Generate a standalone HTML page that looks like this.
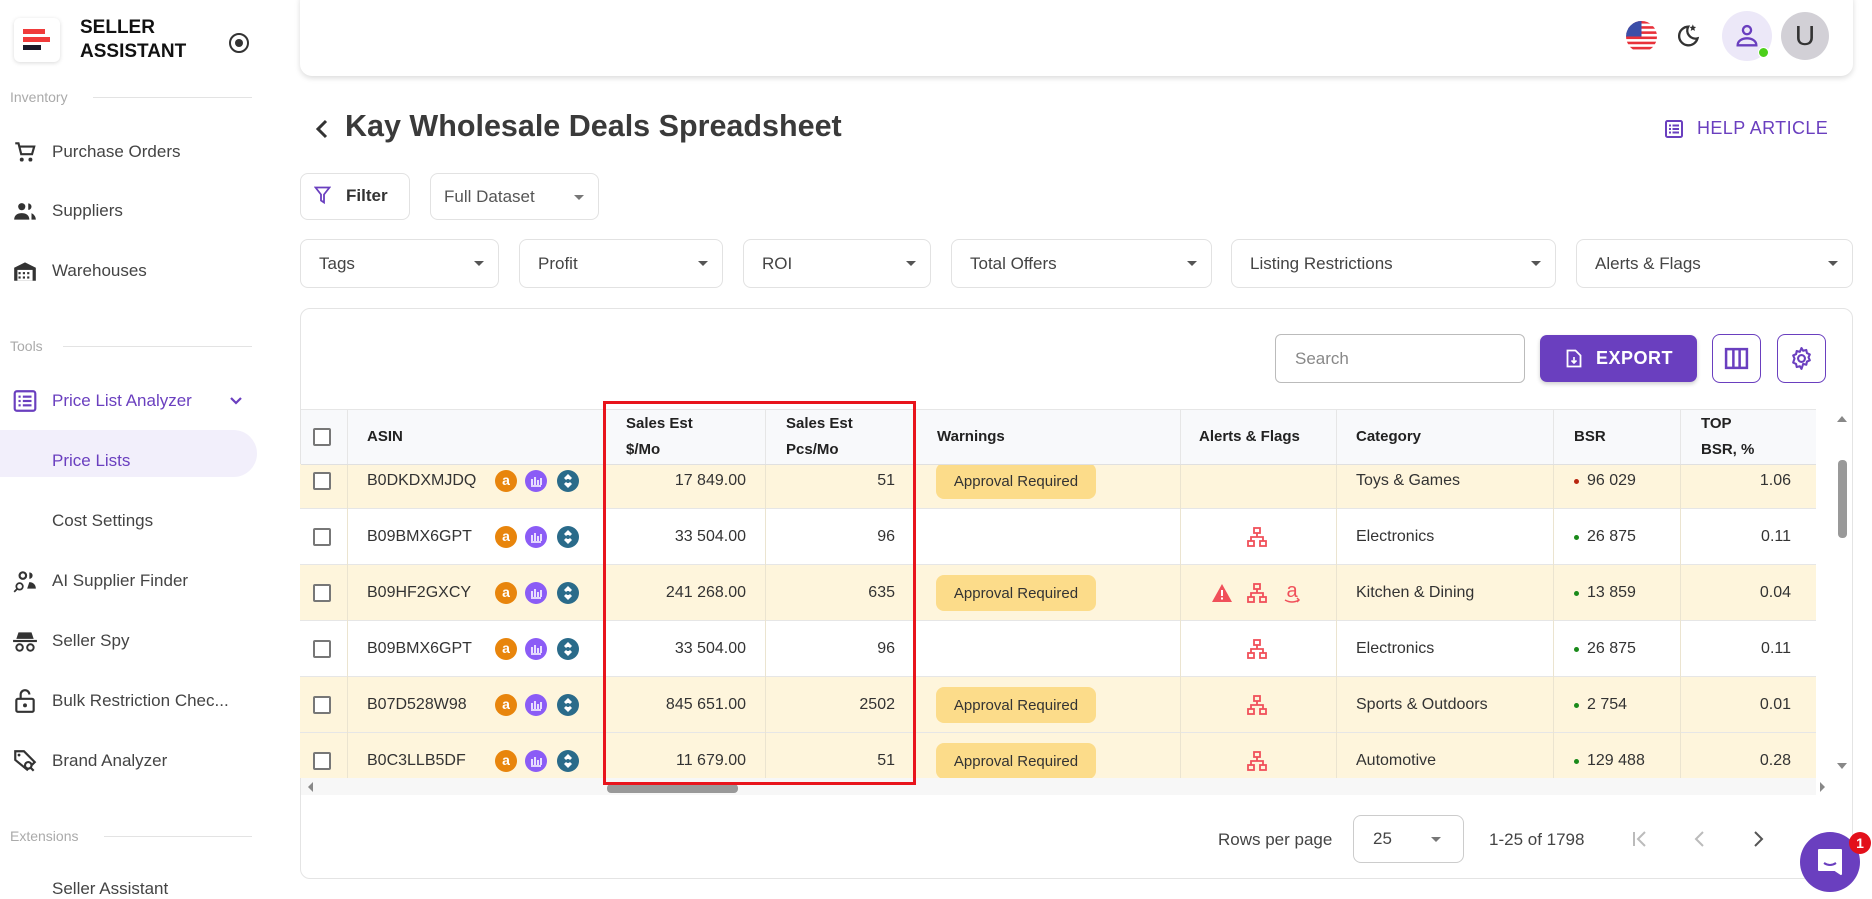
<!DOCTYPE html>
<html><head><meta charset="utf-8"><style>
*{box-sizing:border-box;margin:0;padding:0}
body{width:1872px;height:890px;overflow:hidden;background:#fff;font-family:"Liberation Sans",sans-serif;color:#333;position:relative}
.a{position:absolute}
.side .it{position:absolute;left:52px;font-size:17px;color:#444;transform:translateY(-50%);white-space:nowrap}
.side .ic{position:absolute;left:12px;width:26px;height:26px;transform:translateY(-50%)}
.sec{position:absolute;left:10px;font-size:14px;color:#aaa;transform:translateY(-50%)}
.secl{position:absolute;height:1px;background:#e3e3e3}
.dd{position:absolute;top:239px;height:49px;border:1px solid #e2e2e2;border-radius:8px;font-size:17px;color:#444;padding-left:18px;line-height:47px}
.dd:after{content:"";position:absolute;right:14px;top:21px;border-left:5px solid transparent;border-right:5px solid transparent;border-top:5px solid #555}
.hd{position:absolute;top:410px;height:54px;font-size:15px;font-weight:bold;color:#222;display:flex;align-items:center;line-height:26px}
.row{position:absolute;left:300px;width:1516px;height:56px;border-bottom:1px solid #e6e6e6;background:#fff}
.y{background:#fef5dc}
.c{position:absolute;top:0;height:56px;display:flex;align-items:center;font-size:16px;color:#333;white-space:nowrap}
.r{justify-content:flex-end}
.cb{position:absolute;left:13px;top:19px;width:18px;height:18px;border:2px solid #777;border-radius:2px;background:#fff}
.badge{background:#fcdc8a;border-radius:8px;height:36px;width:160px;display:flex;align-items:center;justify-content:center;font-size:15px;color:#333}
.vl{position:absolute;top:0;width:1px;height:56px;background:#ebe4d0}
.dot{width:5px;height:5px;border-radius:50%;background:#1a8a1a;display:inline-block;margin-right:8px}
.i3{position:absolute;left:183px;top:17px}
.net{position:absolute;left:946px;top:18px}
</style></head><body>

<div class="side">
<div class="a" style="left:14px;top:18px;width:46px;height:44px;border-radius:6px;box-shadow:0 1px 4px rgba(0,0,0,.15);background:#fff">
 <div class="a" style="left:9px;top:11px;width:22px;height:5px;background:#f03b3b"></div>
 <div class="a" style="left:9px;top:19px;width:27px;height:5px;background:#f03b3b"></div>
 <div class="a" style="left:9px;top:27px;width:18px;height:5px;background:#1a1a2a"></div>
</div>
<div class="a" style="left:80px;top:16px;font-size:19px;font-weight:bold;line-height:24px;color:#111">SELLER<br>ASSISTANT</div>
<div class="a" style="left:229px;top:33px;width:20px;height:20px;border:2px solid #333;border-radius:50%"><div class="a" style="left:4px;top:4px;width:8px;height:8px;background:#333;border-radius:50%"></div></div>

<div class="sec" style="top:97px">Inventory</div><div class="secl" style="left:93px;width:159px;top:97px"></div>
<svg class="ic" style="top:152px" viewBox="0 0 24 24"><path d="M3 4h3l2.5 10h10l2-7H7" fill="none" stroke="#333" stroke-width="2"/><circle cx="9" cy="19" r="1.8" fill="#333"/><circle cx="17" cy="19" r="1.8" fill="#333"/></svg>
<div class="it" style="top:152px">Purchase Orders</div>
<svg class="ic" style="top:211px" viewBox="0 0 24 24"><circle cx="9" cy="8" r="3.3" fill="#333"/><path d="M2 20c0-4 3-6 7-6s7 2 7 6z" fill="#333"/><path d="M15 5a3 3 0 010 6M18 14c2 1 4 3 4 6h-4" fill="#333"/></svg>
<div class="it" style="top:211px">Suppliers</div>
<svg class="ic" style="top:271px" viewBox="0 0 24 24"><path d="M2 9l10-5 10 5v12H2z" fill="#333"/><rect x="5" y="11" width="14" height="10" fill="#fff"/><g fill="#333"><rect x="6" y="13" width="2" height="2"/><rect x="10" y="13" width="2" height="2"/><rect x="14" y="13" width="2" height="2"/><rect x="6" y="17" width="2" height="2"/><rect x="10" y="17" width="2" height="2"/><rect x="14" y="17" width="2" height="2"/></g></svg>
<div class="it" style="top:271px">Warehouses</div>

<div class="sec" style="top:346px">Tools</div><div class="secl" style="left:63px;width:189px;top:346px"></div>
<svg class="ic" style="top:401px" viewBox="0 0 24 24"><rect x="2.5" y="3" width="19" height="18" rx="2" fill="none" stroke="#6a3fbf" stroke-width="2"/><g fill="#6a3fbf"><rect x="6" y="7" width="2" height="2"/><rect x="6" y="11" width="2" height="2"/><rect x="6" y="15" width="2" height="2"/><rect x="10" y="7" width="8" height="2"/><rect x="10" y="11" width="8" height="2"/><rect x="10" y="15" width="8" height="2"/></g></svg>
<div class="it" style="top:401px;color:#6a3fbf">Price List Analyzer</div>
<svg class="a" style="left:229px;top:395px" width="14" height="12" viewBox="0 0 14 12"><path d="M2 3l5 5 5-5" fill="none" stroke="#6a3fbf" stroke-width="2.2"/></svg>
<div class="a" style="left:0;top:430px;width:257px;height:47px;background:#f2effb;border-radius:0 24px 24px 0"></div>
<div class="it" style="top:461px;color:#6a3fbf">Price Lists</div>
<div class="it" style="top:521px">Cost Settings</div>
<svg class="ic" style="top:581px" viewBox="0 0 24 24"><circle cx="10" cy="7" r="3" fill="none" stroke="#333" stroke-width="2"/><path d="M16 4a3 3 0 010 6z" fill="#333"/><path d="M16 13c3 0 6 2 6 6h-8z" fill="#333"/><circle cx="7" cy="17" r="3" fill="none" stroke="#333" stroke-width="1.6"/><path d="M5 19l-3 3" stroke="#333" stroke-width="1.6"/></svg>
<div class="it" style="top:581px">AI Supplier Finder</div>
<svg class="ic" style="top:641px" viewBox="0 0 24 24"><path d="M6 4h12l2 6H4z" fill="#333"/><rect x="1" y="11" width="22" height="2" fill="#333"/><circle cx="7" cy="18" r="3" fill="none" stroke="#333" stroke-width="1.8"/><circle cx="17" cy="18" r="3" fill="none" stroke="#333" stroke-width="1.8"/></svg>
<div class="it" style="top:641px">Seller Spy</div>
<svg class="ic" style="top:701px" viewBox="0 0 24 24"><rect x="4" y="10" width="16" height="12" rx="1.5" fill="none" stroke="#333" stroke-width="2"/><path d="M8 10V6a4 4 0 018 0" fill="none" stroke="#333" stroke-width="2"/><circle cx="12" cy="16" r="1.8" fill="#333"/></svg>
<div class="it" style="top:701px">Bulk Restriction Chec...</div>
<svg class="ic" style="top:761px" viewBox="0 0 24 24"><path d="M3 3h8l10 10-7 7L3 11z" fill="none" stroke="#333" stroke-width="2"/><circle cx="6.5" cy="6.5" r="1.3" fill="#333"/><circle cx="15" cy="16" r="3" fill="#fff" stroke="#333" stroke-width="2"/><path d="M17 18l3 3" stroke="#333" stroke-width="2"/></svg>
<div class="it" style="top:761px">Brand Analyzer</div>
<div class="sec" style="top:836px">Extensions</div><div class="secl" style="left:104px;width:148px;top:836px"></div>
<div class="a" style="left:52px;top:879px;font-size:17px;color:#444">Seller Assistant</div>
</div>

<div class="a" style="left:300px;top:-10px;width:1553px;height:86px;border-radius:12px;box-shadow:0 2px 6px rgba(0,0,0,.15);background:#fff"></div>
<svg class="a" style="left:1626px;top:21px" width="31" height="31" viewBox="0 0 30 30"><defs><clipPath id="cp"><circle cx="15" cy="15" r="15"/></clipPath></defs><g clip-path="url(#cp)"><rect width="30" height="30" fill="#fff"/><g fill="#e8313a"><rect y="0" width="30" height="2.5"/><rect y="5" width="30" height="2.5"/><rect y="10" width="30" height="2.5"/><rect y="15" width="30" height="2.5"/><rect y="20" width="30" height="2.5"/><rect y="25" width="30" height="2.5"/></g><rect width="15" height="15" fill="#3b4ea8"/></g></svg>
<svg class="a" style="left:1673px;top:22px" width="28" height="28" viewBox="0 0 24 24"><path d="M13 4a8 8 0 108 10A7 7 0 0113 4z" fill="none" stroke="#333" stroke-width="2"/><path d="M17 2l.8 2 2 .3-1.5 1.3.5 2-1.8-1-1.8 1 .5-2L14.2 4.3l2-.3z" fill="#333"/></svg>
<div class="a" style="left:1722px;top:11px;width:50px;height:50px;border-radius:50%;background:#ece8f8"></div>
<svg class="a" style="left:1733px;top:22px" width="28" height="28" viewBox="0 0 24 24"><circle cx="12" cy="7" r="3.5" fill="none" stroke="#6a3fbf" stroke-width="2"/><path d="M4 20c0-4 4-6 8-6s8 2 8 6z" fill="none" stroke="#6a3fbf" stroke-width="2"/></svg>
<div class="a" style="left:1758px;top:47px;width:11px;height:11px;border-radius:50%;background:#4ccf1a;border:1px solid #fff"></div>
<div class="a" style="left:1781px;top:12px;width:48px;height:48px;border-radius:50%;background:#d2d0d6;font-size:28px;color:#333;text-align:center;line-height:48px">U</div>

<svg class="a" style="left:313px;top:118px" width="18" height="22" viewBox="0 0 18 22"><path d="M13 3L5 11l8 8" fill="none" stroke="#333" stroke-width="3"/></svg>
<div class="a" style="left:345px;top:109px;font-size:30.5px;font-weight:bold;color:#3a3a3a">Kay Wholesale Deals Spreadsheet</div>
<svg class="a" style="left:1665px;top:120px" width="18" height="18" viewBox="0 0 18 18"><rect x="1" y="1" width="16" height="16" rx="1.5" fill="none" stroke="#6a3fbf" stroke-width="2"/><g fill="#6a3fbf"><rect x="4" y="4.5" width="2" height="2"/><rect x="4" y="8" width="2" height="2"/><rect x="4" y="11.5" width="2" height="2"/><rect x="7.5" y="4.5" width="6.5" height="2"/><rect x="7.5" y="8" width="6.5" height="2"/><rect x="7.5" y="11.5" width="6.5" height="2"/></g></svg>
<div class="a" style="left:1697px;top:118px;font-size:18px;color:#6a3fbf;letter-spacing:.4px">HELP ARTICLE</div>

<div class="a" style="left:300px;top:173px;width:110px;height:47px;border:1px solid #e2e2e2;border-radius:8px"></div>
<svg class="a" style="left:314px;top:186px" width="17" height="19" viewBox="0 0 17 19"><path d="M1.5 1.5h14l-5.5 7v8l-3-2v-6z" fill="none" stroke="#6a3fbf" stroke-width="1.8"/></svg>
<div class="a" style="left:346px;top:186px;font-size:17px;font-weight:bold;color:#333">Filter</div>
<div class="a" style="left:430px;top:173px;width:169px;height:47px;border:1px solid #e2e2e2;border-radius:8px;font-size:17px;color:#555;padding-left:13px;line-height:45px">Full Dataset</div>
<div class="a" style="left:574px;top:195px;border-left:5px solid transparent;border-right:5px solid transparent;border-top:5px solid #777"></div>

<div class="dd" style="left:300px;width:199px">Tags</div>
<div class="dd" style="left:519px;width:204px">Profit</div>
<div class="dd" style="left:743px;width:188px">ROI</div>
<div class="dd" style="left:951px;width:261px">Total Offers</div>
<div class="dd" style="left:1231px;width:325px">Listing Restrictions</div>
<div class="dd" style="left:1576px;width:277px">Alerts &amp; Flags</div>

<div class="a" style="left:300px;top:308px;width:1553px;height:571px;border:1px solid #e4e4e4;border-radius:10px"></div>
<div class="a" style="left:1275px;top:334px;width:250px;height:49px;border:1px solid #bbb;border-radius:6px;font-size:17px;color:#888;padding-left:19px;line-height:47px">Search</div>
<div class="a" style="left:1540px;top:335px;width:157px;height:47px;border-radius:7px;background:#6a3fbf;box-shadow:0 2px 4px rgba(0,0,0,.2)"></div>
<svg class="a" style="left:1566px;top:349px" width="16" height="19" viewBox="0 0 16 19"><path d="M1.5 1.5h8l5 5v11h-13z" fill="none" stroke="#fff" stroke-width="1.8"/><path d="M8 8v6M5.5 11.5L8 14l2.5-2.5" fill="none" stroke="#fff" stroke-width="1.6"/></svg>
<div class="a" style="left:1596px;top:348px;font-size:18px;font-weight:bold;color:#fff;letter-spacing:.5px">EXPORT</div>
<div class="a" style="left:1712px;top:334px;width:49px;height:49px;border:1.5px solid #6a3fbf;border-radius:8px"></div>
<svg class="a" style="left:1724px;top:346px" width="25" height="25" viewBox="0 0 24 24"><rect x="2" y="3" width="20" height="18" fill="none" stroke="#6a3fbf" stroke-width="2.4"/><path d="M9 3v18M15 3v18" stroke="#6a3fbf" stroke-width="2.4"/></svg>
<div class="a" style="left:1777px;top:334px;width:49px;height:49px;border:1.5px solid #6a3fbf;border-radius:8px"></div>
<svg class="a" style="left:1789px;top:346px" width="25" height="25" viewBox="0 0 24 24"><circle cx="12" cy="12" r="3.3" fill="none" stroke="#6a3fbf" stroke-width="2"/><path d="M12 2l1.6 2.6 3-.8.6 3 2.8 1.3-1.3 2.8 1.3 2.8-2.8 1.3-.6 3-3-.8L12 22l-1.6-2.6-3 .8-.6-3-2.8-1.3L5.3 12 4 9.1l2.8-1.3.6-3 3 .8z" fill="none" stroke="#6a3fbf" stroke-width="2" stroke-linejoin="round"/></svg>

<div class="a" style="left:0;top:464px;width:1816px;height:314px;overflow:hidden">

<div class="row y" style="top:-11px">
 <div class="cb"></div>
 <div class="c" style="left:67px">B0DKDXMJDQ</div>
 <svg class="i3" width="110" height="22"><circle cx="23" cy="11" r="11" fill="#e8850c"/><text x="23" y="15" font-size="14" font-weight="bold" fill="#fff" text-anchor="middle">a</text><circle cx="53" cy="11" r="11" fill="#8b5cf6"/><path d="M48 16h10M49 15V9M52 15V7M55 15V10M58 15V8" stroke="#fff" stroke-width="1.6"/><circle cx="85" cy="11" r="11" fill="#2a6b8a"/><path d="M85 4l4 4-4 4-4-4zM85 10l4 4-4 4-4-4z" fill="#fff"/><circle cx="85" cy="11" r="2" fill="#2a6b8a"/></svg>
 <div class="vl" style="left:47px"></div><div class="vl" style="left:303px"></div><div class="vl" style="left:465px"></div><div class="vl" style="left:615px"></div><div class="vl" style="left:880px"></div><div class="vl" style="left:1036px"></div><div class="vl" style="left:1253px"></div><div class="vl" style="left:1380px"></div>
 <div class="c r" style="left:303px;width:143px">17 849.00</div>
 <div class="c r" style="left:465px;width:130px">51</div>
 <div class="c" style="left:636px"><div class="badge">Approval Required</div></div>
 <div class="c" style="left:1056px">Toys &amp; Games</div>
 <div class="c" style="left:1274px"><span class="dot" style="background:#b8260f"></span>96 029</div>
 <div class="c r" style="left:1380px;width:111px">1.06</div>
</div>

<div class="row" style="top:45px">
 <div class="cb"></div>
 <div class="c" style="left:67px">B09BMX6GPT</div>
 <svg class="i3" width="110" height="22"><circle cx="23" cy="11" r="11" fill="#e8850c"/><text x="23" y="15" font-size="14" font-weight="bold" fill="#fff" text-anchor="middle">a</text><circle cx="53" cy="11" r="11" fill="#8b5cf6"/><path d="M48 16h10M49 15V9M52 15V7M55 15V10M58 15V8" stroke="#fff" stroke-width="1.6"/><circle cx="85" cy="11" r="11" fill="#2a6b8a"/><path d="M85 4l4 4-4 4-4-4zM85 10l4 4-4 4-4-4z" fill="#fff"/><circle cx="85" cy="11" r="2" fill="#2a6b8a"/></svg>
 <div class="vl" style="left:47px"></div><div class="vl" style="left:303px"></div><div class="vl" style="left:465px"></div><div class="vl" style="left:615px"></div><div class="vl" style="left:880px"></div><div class="vl" style="left:1036px"></div><div class="vl" style="left:1253px"></div><div class="vl" style="left:1380px"></div>
 <div class="c r" style="left:303px;width:143px">33 504.00</div>
 <div class="c r" style="left:465px;width:130px">96</div>
 <svg class="net" width="22" height="20"><g fill="none" stroke="#f0505a" stroke-width="1.8"><rect x="8" y="1" width="6" height="5"/><rect x="2" y="14" width="6" height="5"/><rect x="14" y="14" width="6" height="5"/><path d="M11 6v4M5 14v-4h12v4"/></g></svg>
 <div class="c" style="left:1056px">Electronics</div>
 <div class="c" style="left:1274px"><span class="dot"></span>26 875</div>
 <div class="c r" style="left:1380px;width:111px">0.11</div>
</div>

<div class="row y" style="top:101px">
 <div class="cb"></div>
 <div class="c" style="left:67px">B09HF2GXCY</div>
 <svg class="i3" width="110" height="22"><circle cx="23" cy="11" r="11" fill="#e8850c"/><text x="23" y="15" font-size="14" font-weight="bold" fill="#fff" text-anchor="middle">a</text><circle cx="53" cy="11" r="11" fill="#8b5cf6"/><path d="M48 16h10M49 15V9M52 15V7M55 15V10M58 15V8" stroke="#fff" stroke-width="1.6"/><circle cx="85" cy="11" r="11" fill="#2a6b8a"/><path d="M85 4l4 4-4 4-4-4zM85 10l4 4-4 4-4-4z" fill="#fff"/><circle cx="85" cy="11" r="2" fill="#2a6b8a"/></svg>
 <div class="vl" style="left:47px"></div><div class="vl" style="left:303px"></div><div class="vl" style="left:465px"></div><div class="vl" style="left:615px"></div><div class="vl" style="left:880px"></div><div class="vl" style="left:1036px"></div><div class="vl" style="left:1253px"></div><div class="vl" style="left:1380px"></div>
 <div class="c r" style="left:303px;width:143px">241 268.00</div>
 <div class="c r" style="left:465px;width:130px">635</div>
 <div class="c" style="left:636px"><div class="badge">Approval Required</div></div>
 <svg class="a" style="left:911px;top:18px" width="22" height="20" viewBox="0 0 22 20"><path d="M11 1l10 18H1z" fill="#f0505a"/><rect x="10" y="7" width="2" height="6" fill="#fff"/><rect x="10" y="14.5" width="2" height="2" fill="#fff"/></svg>
 <svg class="net" width="22" height="20"><g fill="none" stroke="#f0505a" stroke-width="1.8"><rect x="8" y="1" width="6" height="5"/><rect x="2" y="14" width="6" height="5"/><rect x="14" y="14" width="6" height="5"/><path d="M11 6v4M5 14v-4h12v4"/></g></svg>
 <svg class="a" style="left:981px;top:16px" width="22" height="24" viewBox="0 0 22 24"><text x="11" y="16" font-size="20" fill="#f0505a" text-anchor="middle">a</text><path d="M4 19q7 4 14 0M16 17l2 2-2 2" fill="none" stroke="#f0505a" stroke-width="1.5"/></svg>
 <div class="c" style="left:1056px">Kitchen &amp; Dining</div>
 <div class="c" style="left:1274px"><span class="dot"></span>13 859</div>
 <div class="c r" style="left:1380px;width:111px">0.04</div>
</div>

<div class="row" style="top:157px">
 <div class="cb"></div>
 <div class="c" style="left:67px">B09BMX6GPT</div>
 <svg class="i3" width="110" height="22"><circle cx="23" cy="11" r="11" fill="#e8850c"/><text x="23" y="15" font-size="14" font-weight="bold" fill="#fff" text-anchor="middle">a</text><circle cx="53" cy="11" r="11" fill="#8b5cf6"/><path d="M48 16h10M49 15V9M52 15V7M55 15V10M58 15V8" stroke="#fff" stroke-width="1.6"/><circle cx="85" cy="11" r="11" fill="#2a6b8a"/><path d="M85 4l4 4-4 4-4-4zM85 10l4 4-4 4-4-4z" fill="#fff"/><circle cx="85" cy="11" r="2" fill="#2a6b8a"/></svg>
 <div class="vl" style="left:47px"></div><div class="vl" style="left:303px"></div><div class="vl" style="left:465px"></div><div class="vl" style="left:615px"></div><div class="vl" style="left:880px"></div><div class="vl" style="left:1036px"></div><div class="vl" style="left:1253px"></div><div class="vl" style="left:1380px"></div>
 <div class="c r" style="left:303px;width:143px">33 504.00</div>
 <div class="c r" style="left:465px;width:130px">96</div>
 <svg class="net" width="22" height="20"><g fill="none" stroke="#f0505a" stroke-width="1.8"><rect x="8" y="1" width="6" height="5"/><rect x="2" y="14" width="6" height="5"/><rect x="14" y="14" width="6" height="5"/><path d="M11 6v4M5 14v-4h12v4"/></g></svg>
 <div class="c" style="left:1056px">Electronics</div>
 <div class="c" style="left:1274px"><span class="dot"></span>26 875</div>
 <div class="c r" style="left:1380px;width:111px">0.11</div>
</div>

<div class="row y" style="top:213px">
 <div class="cb"></div>
 <div class="c" style="left:67px">B07D528W98</div>
 <svg class="i3" width="110" height="22"><circle cx="23" cy="11" r="11" fill="#e8850c"/><text x="23" y="15" font-size="14" font-weight="bold" fill="#fff" text-anchor="middle">a</text><circle cx="53" cy="11" r="11" fill="#8b5cf6"/><path d="M48 16h10M49 15V9M52 15V7M55 15V10M58 15V8" stroke="#fff" stroke-width="1.6"/><circle cx="85" cy="11" r="11" fill="#2a6b8a"/><path d="M85 4l4 4-4 4-4-4zM85 10l4 4-4 4-4-4z" fill="#fff"/><circle cx="85" cy="11" r="2" fill="#2a6b8a"/></svg>
 <div class="vl" style="left:47px"></div><div class="vl" style="left:303px"></div><div class="vl" style="left:465px"></div><div class="vl" style="left:615px"></div><div class="vl" style="left:880px"></div><div class="vl" style="left:1036px"></div><div class="vl" style="left:1253px"></div><div class="vl" style="left:1380px"></div>
 <div class="c r" style="left:303px;width:143px">845 651.00</div>
 <div class="c r" style="left:465px;width:130px">2502</div>
 <div class="c" style="left:636px"><div class="badge">Approval Required</div></div>
 <svg class="net" width="22" height="20"><g fill="none" stroke="#f0505a" stroke-width="1.8"><rect x="8" y="1" width="6" height="5"/><rect x="2" y="14" width="6" height="5"/><rect x="14" y="14" width="6" height="5"/><path d="M11 6v4M5 14v-4h12v4"/></g></svg>
 <div class="c" style="left:1056px">Sports &amp; Outdoors</div>
 <div class="c" style="left:1274px"><span class="dot"></span>2 754</div>
 <div class="c r" style="left:1380px;width:111px">0.01</div>
</div>

<div class="row y" style="top:269px">
 <div class="cb"></div>
 <div class="c" style="left:67px">B0C3LLB5DF</div>
 <svg class="i3" width="110" height="22"><circle cx="23" cy="11" r="11" fill="#e8850c"/><text x="23" y="15" font-size="14" font-weight="bold" fill="#fff" text-anchor="middle">a</text><circle cx="53" cy="11" r="11" fill="#8b5cf6"/><path d="M48 16h10M49 15V9M52 15V7M55 15V10M58 15V8" stroke="#fff" stroke-width="1.6"/><circle cx="85" cy="11" r="11" fill="#2a6b8a"/><path d="M85 4l4 4-4 4-4-4zM85 10l4 4-4 4-4-4z" fill="#fff"/><circle cx="85" cy="11" r="2" fill="#2a6b8a"/></svg>
 <div class="vl" style="left:47px"></div><div class="vl" style="left:303px"></div><div class="vl" style="left:465px"></div><div class="vl" style="left:615px"></div><div class="vl" style="left:880px"></div><div class="vl" style="left:1036px"></div><div class="vl" style="left:1253px"></div><div class="vl" style="left:1380px"></div>
 <div class="c r" style="left:303px;width:143px">11 679.00</div>
 <div class="c r" style="left:465px;width:130px">51</div>
 <div class="c" style="left:636px"><div class="badge">Approval Required</div></div>
 <svg class="net" width="22" height="20"><g fill="none" stroke="#f0505a" stroke-width="1.8"><rect x="8" y="1" width="6" height="5"/><rect x="2" y="14" width="6" height="5"/><rect x="14" y="14" width="6" height="5"/><path d="M11 6v4M5 14v-4h12v4"/></g></svg>
 <div class="c" style="left:1056px">Automotive</div>
 <div class="c" style="left:1274px"><span class="dot"></span>129 488</div>
 <div class="c r" style="left:1380px;width:111px">0.28</div>
</div>

</div>

<div class="a" style="left:301px;top:409px;width:1515px;height:56px;background:#f8f9fb;border-top:1px solid #e6e6e6;border-bottom:1px solid #e0e0e0"></div>
<div class="a" style="left:313px;top:428px;width:18px;height:18px;border:2px solid #777;border-radius:2px;background:#fff"></div>
<div class="hd" style="left:367px">ASIN</div>
<div class="hd" style="left:626px">Sales Est<br>$/Mo</div>
<div class="hd" style="left:786px">Sales Est<br>Pcs/Mo</div>
<div class="hd" style="left:937px">Warnings</div>
<div class="hd" style="left:1199px">Alerts &amp; Flags</div>
<div class="hd" style="left:1356px">Category</div>
<div class="hd" style="left:1574px">BSR</div>
<div class="hd" style="left:1701px">TOP<br>BSR, %</div>
<div class="a" style="left:347px;top:410px;width:1px;height:54px;background:#e6e6e6"></div>
<div class="a" style="left:765px;top:410px;width:1px;height:54px;background:#e6e6e6"></div>
<div class="a" style="left:915px;top:410px;width:1px;height:54px;background:#e6e6e6"></div>
<div class="a" style="left:1180px;top:410px;width:1px;height:54px;background:#e6e6e6"></div>
<div class="a" style="left:1336px;top:410px;width:1px;height:54px;background:#e6e6e6"></div>
<div class="a" style="left:1553px;top:410px;width:1px;height:54px;background:#e6e6e6"></div>
<div class="a" style="left:1680px;top:410px;width:1px;height:54px;background:#e6e6e6"></div>

<div class="a" style="left:301px;top:778px;width:1515px;height:17px;background:#f7f7f7"></div>
<div class="a" style="left:607px;top:784px;width:131px;height:9px;background:#999;border-radius:4px"></div>
<div class="a" style="left:308px;top:782px;border-top:5px solid transparent;border-bottom:5px solid transparent;border-right:5px solid #888"></div>
<div class="a" style="left:1820px;top:782px;border-top:5px solid transparent;border-bottom:5px solid transparent;border-left:5px solid #888"></div>
<div class="a" style="left:1816px;top:410px;width:36px;height:368px;background:#fff"></div>
<div class="a" style="left:1837px;top:416px;border-left:5px solid transparent;border-right:5px solid transparent;border-bottom:6px solid #888"></div>
<div class="a" style="left:1838px;top:460px;width:9px;height:78px;background:#999;border-radius:4px"></div>
<div class="a" style="left:1837px;top:763px;border-left:5px solid transparent;border-right:5px solid transparent;border-top:6px solid #888"></div>

<div class="a" style="left:603px;top:401px;width:313px;height:384px;border:3px solid #e8141c"></div>

<div class="a" style="left:1218px;top:830px;font-size:17px;color:#444">Rows per page</div>
<div class="a" style="left:1353px;top:815px;width:111px;height:48px;border:1px solid #ccc;border-radius:8px;font-size:17px;color:#444;padding-left:19px;line-height:46px">25</div>
<div class="a" style="left:1431px;top:837px;border-left:5px solid transparent;border-right:5px solid transparent;border-top:5px solid #777"></div>
<div class="a" style="left:1489px;top:830px;font-size:17px;color:#444">1-25 of 1798</div>
<svg class="a" style="left:1630px;top:829px" width="20" height="20" viewBox="0 0 20 20"><path d="M4 3v14M15 3l-7 7 7 7" fill="none" stroke="#bbb" stroke-width="2"/></svg>
<svg class="a" style="left:1690px;top:829px" width="20" height="20" viewBox="0 0 20 20"><path d="M13 3l-7 7 7 7" fill="none" stroke="#bbb" stroke-width="2"/></svg>
<svg class="a" style="left:1748px;top:829px" width="20" height="20" viewBox="0 0 20 20"><path d="M7 3l7 7-7 7" fill="none" stroke="#555" stroke-width="2"/></svg>
<div class="a" style="left:1800px;top:832px;width:60px;height:60px;border-radius:50%;background:#6a3fbf"></div>
<svg class="a" style="left:1815px;top:846px" width="30" height="32" viewBox="0 0 30 32"><path d="M4 4h22v24l-6-4H4z" fill="#fff" stroke="#fff" stroke-width="2" stroke-linejoin="round"/><path d="M9 17q6 4 12 0" fill="none" stroke="#6a3fbf" stroke-width="2"/></svg>
<div class="a" style="left:1849px;top:832px;width:22px;height:22px;border-radius:50%;background:#e3101b;color:#fff;font-size:14px;font-weight:bold;text-align:center;line-height:22px">1</div>
</body></html>
